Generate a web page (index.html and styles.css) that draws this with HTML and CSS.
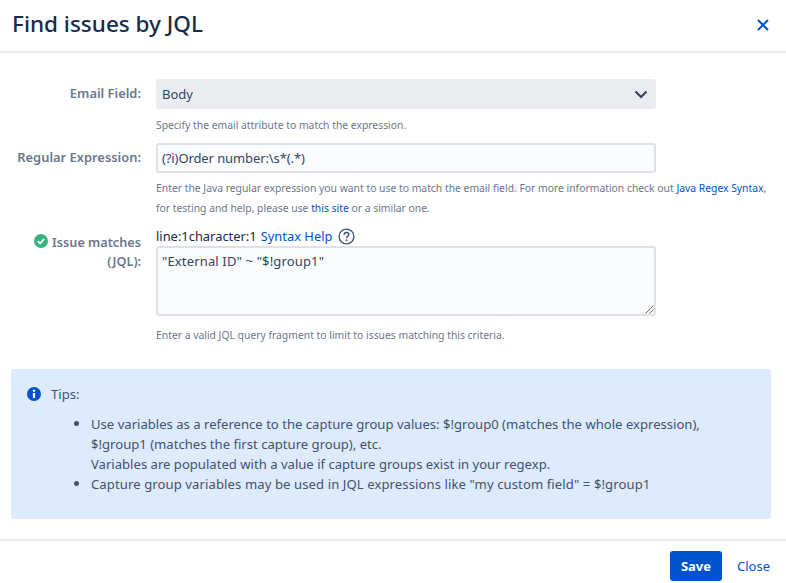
FILE: index.html
```html
<!DOCTYPE html>
<html lang="en">
<head>
<meta charset="utf-8">
<title>Find issues by JQL</title>
<link rel="stylesheet" href="styles.css">
</head>
<body>
<div class="dialog">
  <header class="dialog-header">
    <h1>Find issues by JQL</h1>
    <a class="close-x" href="#" aria-label="Close">
      <svg width="12" height="12" viewBox="0 0 12 12"><path d="M1 1l10 10M11 1L1 11" stroke="#0052cc" stroke-width="2" fill="none"/></svg>
    </a>
  </header>
  <main class="dialog-body">
    <form class="form">
      <div class="row row-email">
        <label class="label">Email Field:</label>
        <div class="field">
          <div class="select"><span>Body</span>
            <svg width="14" height="9" viewBox="0 0 14 9"><path d="M1.5 1.5L7 7l5.5-5.5" stroke="#344563" stroke-width="2.2" fill="none"/></svg>
          </div>
          <p class="help help-email">Specify the email attribute to match the expression.</p>
        </div>
      </div>
      <div class="row row-regex">
        <label class="label">Regular Expression:</label>
        <div class="field">
          <div class="input">(?i)Order number:\s*(.*)</div>
          <p class="help help-regex">Enter the Java regular expression you want to use to match the email field. For more information check out <a href="#">Java Regex Syntax</a>,<br>for testing and help, please use <a href="#">this site</a> or a similar one.</p>
        </div>
      </div>
      <div class="row row-jql">
        <label class="label label-jql">
          <svg class="ok" width="14" height="14" viewBox="0 0 14 14"><circle cx="7" cy="7" r="7" fill="#36b37e"/><path d="M3.8 7.2l2.3 2.2 4.1-4.4" stroke="#fff" stroke-width="1.8" fill="none"/></svg>
          Issue matches (JQL):
        </label>
        <div class="field">
          <div class="syntax">line:1character:1 <a href="#">Syntax Help</a>
            <svg class="q" width="17" height="17" viewBox="0 0 17 17"><circle cx="8.5" cy="8.5" r="7.4" stroke="#42526e" stroke-width="1.3" fill="none"/><path d="M6.2 6.8c0-1.5 1-2.3 2.3-2.3s2.3.8 2.3 2.1c0 1.8-2.3 1.8-2.3 3.6" stroke="#42526e" stroke-width="1.5" fill="none"/><circle cx="8.5" cy="12.3" r="1" fill="#42526e"/></svg>
          </div>
          <div class="textarea">"External ID" ~ "$!group1"
            <svg class="grip" width="9" height="9" viewBox="0 0 9 9"><path d="M0.5 8.5l8-8M4.5 8.5l4-4" stroke="#444" stroke-width="0.8" fill="none"/></svg>
          </div>
          <p class="help help-jql">Enter a valid JQL query fragment to limit to issues matching this criteria.</p>
        </div>
      </div>
    </form>
    <section class="tips">
      <div class="tips-head">
        <svg width="14" height="14" viewBox="0 0 14 14"><circle cx="7" cy="7" r="7" fill="#0052cc"/><circle cx="7" cy="3.8" r="1.2" fill="#fff"/><rect x="5.9" y="6" width="2.2" height="5" fill="#fff"/></svg>
        <span>Tips:</span>
      </div>
      <ul>
        <li>Use variables as a reference to the capture group values: $!group0 (matches the whole expression),<br>$!group1 (matches the first capture group), etc.<br>Variables are populated with a value if capture groups exist in your regexp.</li>
        <li class="tip-last">Capture group variables may be used in JQL expressions like "my custom field" = $!group1</li>
      </ul>
    </section>
  </main>
  <footer class="dialog-footer">
    <button class="save" type="button">Save</button>
    <a class="close" href="#">Close</a>
  </footer>
</div>
</body>
</html>
```
FILE: styles.css
```css
* { box-sizing: border-box; }
html, body { margin: 0; padding: 0; background: #fff; }
body {
  font-family: "Noto Sans", "Open Sans", sans-serif;
  font-size: 13px;
  color: #172b4d;
  width: 786px;
  height: 583px;
  overflow: hidden;
}
a { color: #0052cc; text-decoration: none; }
.dialog { display: flex; flex-direction: column; height: 583px; }
.dialog-header {
  height: 53px;
  border-bottom: 2px solid #ebecf0;
  display: flex;
  align-items: center;
  justify-content: space-between;
  padding: 0 17px 2px 12px;
  flex: none;
}
.dialog-header h1 {
  margin: 0 0 2px;
  font-size: 22.5px;
  font-weight: 500;
  line-height: 50px;
  color: #172b4d;
}
.close-x { display: flex; }
.dialog-body { flex: 1; padding: 26px 15px 0 11px; }
.form { display: flex; flex-direction: column; }
.row { display: flex; }
.label {
  width: 130px;
  flex: none;
  text-align: right;
  font-weight: 600;
  font-size: 12.9px;
  line-height: 19px;
  color: #6b778c;
  padding-top: 5px;
}
.field { width: 500px; margin-left: 15px; flex: none; }
.select {
  height: 30px;
  background: #ebecf0;
  border-radius: 3px;
  display: flex;
  align-items: center;
  justify-content: space-between;
  padding: 0 8px 0 6px;
  color: #344563;
  font-size: 13px;
}
.input {
  height: 30px;
  background: #fafbfc;
  border: 2px solid #dfe1e6;
  border-radius: 3px;
  padding: 0 4px;
  line-height: 26px;
  color: #344563;
  font-size: 13px;
  letter-spacing: -0.1px;
}
.help {
  margin: 0;
  font-size: 10.35px;
  line-height: 20px;
  color: #6b778c;
  white-space: nowrap;
}
.help-email { margin-top: 6px; height: 28px; }
.help-regex { margin-top: 5px; }
.row-jql { margin-top: 8px; }
.label-jql { padding-top: 7px; font-size: 12.7px; }
.ok { vertical-align: -1px; margin-right: 1px; }
.syntax { font-size: 12.9px; line-height: 20px; color: #172b4d; height: 20px; display: flex; align-items: center; gap: 4px; }
.q { margin-left: 2px; }
.textarea {
  position: relative;
  height: 70px;
  background: #fafbfc;
  border: 2px solid #dfe1e6;
  border-radius: 3px;
  padding: 0 4px;
  line-height: 26px;
  color: #344563;
  font-size: 13px;
  letter-spacing: 0.15px;
}
.grip { position: absolute; right: 0; bottom: 0; }
.help-jql { margin-top: 9px; }
.tips {
  margin-top: 24px;
  height: 150px;
  background: #deebff;
  border-radius: 3px;
  padding: 15px 16px;
  color: #42526e;
  font-size: 13.1px;
  line-height: 20px;
}
.tips-head { display: flex; align-items: center; gap: 10px; }
.tips ul { margin: 10px 0 0; padding: 0 0 0 64px; white-space: nowrap; list-style: none; }
.tips li { position: relative; }
.tips li::before {
  content: "";
  position: absolute;
  left: -17px;
  top: 7px;
  width: 5px;
  height: 5px;
  border-radius: 50%;
  background: #42526e;
}
.tip-last { letter-spacing: 0.09px; }
.dialog-footer {
  height: 44px;
  border-top: 2px solid #ebecf0;
  display: flex;
  justify-content: flex-end;
  align-items: flex-end;
  padding: 0 16px 2px;
  gap: 15px;
  flex: none;
}
.save {
  width: 52px;
  height: 30px;
  background: #0052cc;
  border: 0;
  border-radius: 3px;
  color: #fff;
  font: 700 13px "Noto Sans", "Open Sans", sans-serif;
  padding: 0;
}
.close { line-height: 30px; font-size: 13px; }
```
